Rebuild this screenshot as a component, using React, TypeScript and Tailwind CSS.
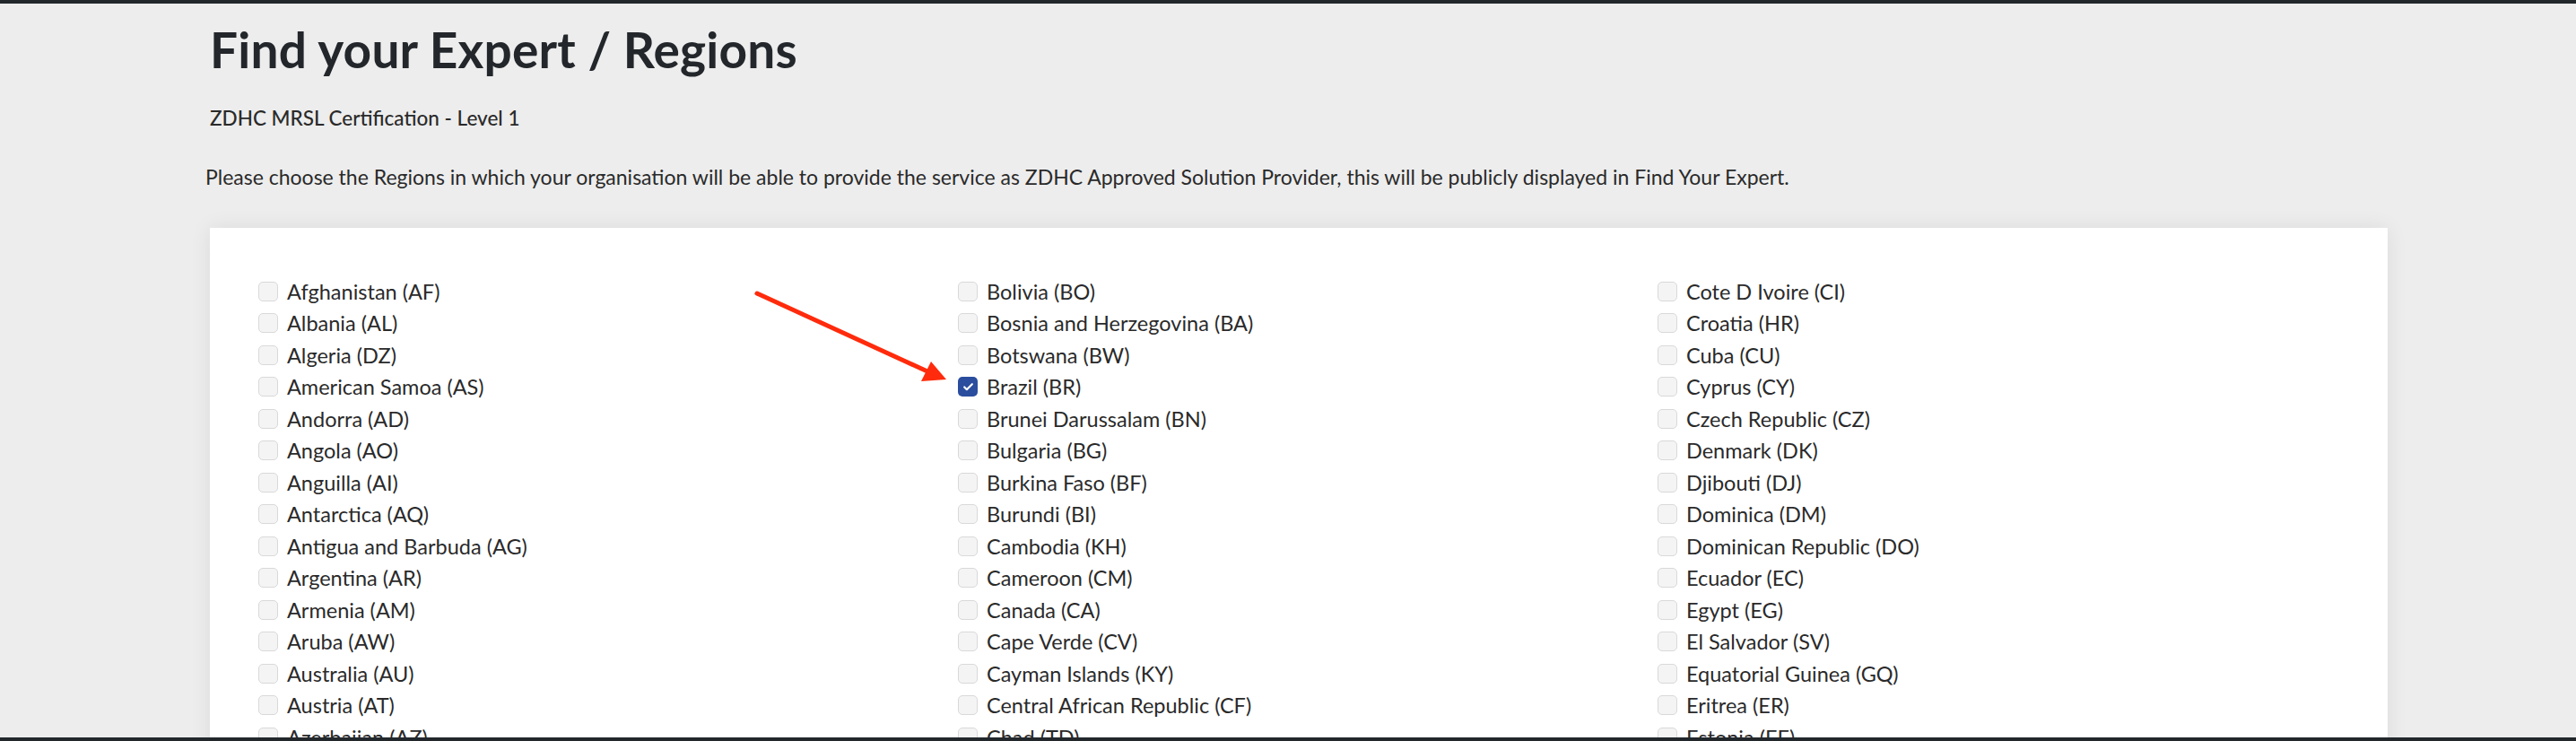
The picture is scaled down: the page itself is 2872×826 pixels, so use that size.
import { Check } from "lucide-react";

const col1 = [
  "Afghanistan (AF)",
  "Albania (AL)",
  "Algeria (DZ)",
  "American Samoa (AS)",
  "Andorra (AD)",
  "Angola (AO)",
  "Anguilla (AI)",
  "Antarctica (AQ)",
  "Antigua and Barbuda (AG)",
  "Argentina (AR)",
  "Armenia (AM)",
  "Aruba (AW)",
  "Australia (AU)",
  "Austria (AT)",
  "Azerbaijan (AZ)",
  "Bahamas (BS)",
  "Bahrain (BH)",
];

const col2 = [
  "Bolivia (BO)",
  "Bosnia and Herzegovina (BA)",
  "Botswana (BW)",
  "Brazil (BR)",
  "Brunei Darussalam (BN)",
  "Bulgaria (BG)",
  "Burkina Faso (BF)",
  "Burundi (BI)",
  "Cambodia (KH)",
  "Cameroon (CM)",
  "Canada (CA)",
  "Cape Verde (CV)",
  "Cayman Islands (KY)",
  "Central African Republic (CF)",
  "Chad (TD)",
  "Chile (CL)",
  "China (CN)",
];

const col3 = [
  "Cote D Ivoire (CI)",
  "Croatia (HR)",
  "Cuba (CU)",
  "Cyprus (CY)",
  "Czech Republic (CZ)",
  "Denmark (DK)",
  "Djibouti (DJ)",
  "Dominica (DM)",
  "Dominican Republic (DO)",
  "Ecuador (EC)",
  "Egypt (EG)",
  "El Salvador (SV)",
  "Equatorial Guinea (GQ)",
  "Eritrea (ER)",
  "Estonia (EE)",
  "Ethiopia (ET)",
  "Fiji (FJ)",
];

const checked = ["Brazil (BR)"];

function Region({ name }: { name: string }) {
  const on = checked.includes(name);
  return (
    <label className="flex items-center gap-[10px] h-[35.5px]">
      {on ? (
        <span className="w-[22px] h-[22px] rounded-[5px] bg-[#2a4d9e] flex items-center justify-center">
          <Check className="w-[13px] h-[13px] text-white" strokeWidth={4} />
        </span>
      ) : (
        <span className="w-[22px] h-[22px] rounded-[5px] bg-[#f4f4f4] border border-[#d9d9d9]" />
      )}
      <span className="text-[23.5px] leading-[26px] text-[#2a2a2a]">{name}</span>
    </label>
  );
}

function App() {
  return (
    <div
      className="h-[826px] flex flex-col bg-[#ededed] overflow-hidden"
      style={{ fontFamily: "Lato, 'Noto Sans', sans-serif" }}
    >
      <div className="h-[4px] bg-[#22272b]" />

      <div className="flex-1 overflow-hidden pl-[234px]">
        <h1 className="mt-[19px] text-[55px] leading-[64px] font-bold text-[#23272b] tracking-[0.2px]">
          Find your Expert / Regions
        </h1>
        <p className="mt-[31px] text-[22.5px] leading-[27px] font-medium text-[#2a2a2a]">
          ZDHC MRSL Certification - Level 1
        </p>
        <p className="mt-[38.5px] -ml-[5px] text-[23px] leading-[27px] text-[#2a2a2a]">
          Please choose the Regions in which your organisation will be able to provide the service as ZDHC
          Approved Solution Provider, this will be publicly displayed in Find Your Expert.
        </p>

        {/* card with the regions */}
        <div className="relative mt-[43.5px] w-[2428px] bg-white shadow-[0_0_22px_rgba(0,0,0,0.08)] pt-[53px] pl-[54px] pb-10">
          <div className="grid grid-cols-[repeat(3,780px)]">
            <div className="flex flex-col">
              {col1.map((c) => (
                <Region key={c} name={c} />
              ))}
            </div>
            <div className="flex flex-col">
              {col2.map((c) => (
                <Region key={c} name={c} />
              ))}
            </div>
            <div className="flex flex-col">
              {col3.map((c) => (
                <Region key={c} name={c} />
              ))}
            </div>
          </div>

          {/* red annotation arrow */}
          <svg
            className="absolute left-[600px] top-[60px] w-[240px] h-[130px] pointer-events-none"
            viewBox="0 0 240 130"
          >
            <line x1="10" y1="13" x2="200" y2="100" stroke="#ff2b0c" strokeWidth="5" strokeLinecap="round" />
            <polygon points="221,109 193,111 204,89" fill="#ff2b0c" />
          </svg>
        </div>
      </div>

      <div className="h-[4px] bg-[#22272b]" />
    </div>
  );
}

export default App;
